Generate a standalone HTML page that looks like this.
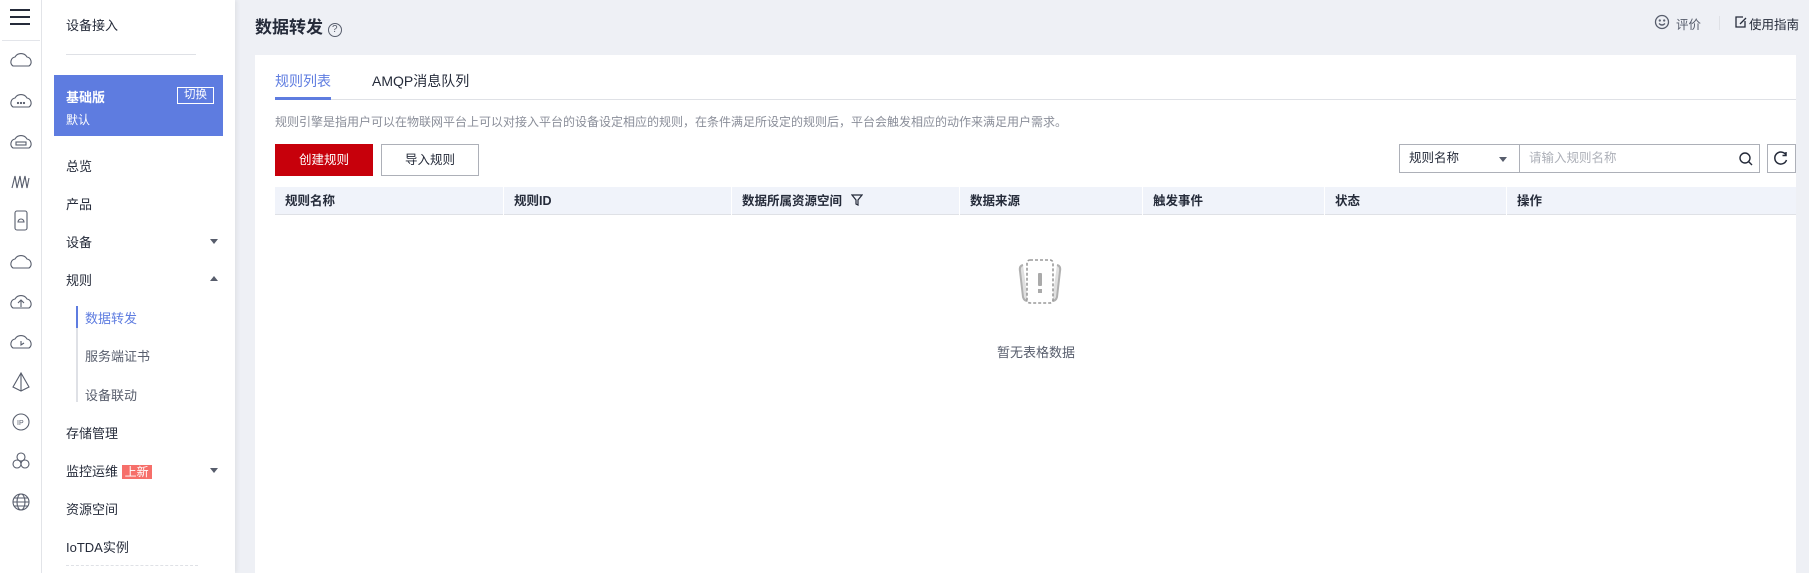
<!DOCTYPE html>
<html><head><meta charset="utf-8"><style>
*{margin:0;padding:0;box-sizing:border-box}
body{width:1809px;height:573px;overflow:hidden;background:#eef0f5;font-family:"Liberation Sans","Noto Sans CJK SC",sans-serif;color:#252b3a;position:relative;font-size:13px}
.a{position:absolute;white-space:nowrap}
.ic{position:absolute;left:0;width:42px;height:573px;background:#fff;border-right:1px solid #e3e5ea}
.sb{position:absolute;left:42px;top:0;width:193px;height:573px;background:#fff;box-shadow:2px 0 4px rgba(0,0,0,.06)}
.mi{position:absolute;left:24px;font-size:13px;color:#252b3a}
.sub{position:absolute;left:43px;font-size:13px;color:#575d6c}
.arr{position:absolute;left:168px;width:0;height:0;border-left:4px solid transparent;border-right:4px solid transparent}
.card{position:absolute;left:255px;top:55px;width:1541px;height:518px;background:#fff}
.th{position:absolute;top:0;height:28px;line-height:28px;font-size:12.5px;color:#252b3a;font-weight:bold;padding-left:10px}
</style></head><body>
<div class="ic">
  <div class="a" style="left:10px;top:9px;width:20px;height:2px;background:#252b3a"></div>
  <div class="a" style="left:10px;top:16px;width:20px;height:2px;background:#252b3a"></div>
  <div class="a" style="left:10px;top:23px;width:20px;height:2px;background:#252b3a"></div>
  <div class="a" style="left:2px;top:40px;width:38px;height:1px;background:#e3e5ea"></div>
  <svg class="a" style="left:9px;top:48px" width="24" height="480" fill="none" stroke="#575d6c" stroke-width="1.1">
    <g transform="translate(0,0)"><path d="M4 18 a5 5 0 0 1 2-9 a7 7 0 0 1 12 0 a5 5 0 0 1 2 9z"/></g>
    <g transform="translate(0,41)"><path d="M4 18 a5 5 0 0 1 2-9 a7 7 0 0 1 12 0 a5 5 0 0 1 2 9z"/><circle cx="9" cy="14" r=".6"/><circle cx="12" cy="14" r=".6"/><circle cx="15" cy="14" r=".6"/></g>
    <g transform="translate(0,82)"><path d="M4 18 a5 5 0 0 1 2-9 a7 7 0 0 1 12 0 a5 5 0 0 1 2 9z"/><rect x="7" y="12" width="10" height="3"/></g>
    <g transform="translate(0,122)"><path d="M3 18 L6 6 L8 18 L11 6 L13 18 L16 6 L18 18 L20 8"/></g>
    <g transform="translate(0,161)"><rect x="6" y="2" width="12" height="19" rx="2"/><path d="M9 13 a3 3 0 0 1 6 0z"/></g>
    <g transform="translate(0,202)"><path d="M4 18 a5 5 0 0 1 2-9 a7 7 0 0 1 12 0 a5 5 0 0 1 2 9z"/></g>
    <g transform="translate(0,242)"><path d="M4 18 a5 5 0 0 1 2-9 a7 7 0 0 1 12 0 a5 5 0 0 1 2 9z"/><path d="M12 17 V11 M9 13 L12 10 L15 13"/></g>
    <g transform="translate(0,282)"><path d="M4 18 a5 5 0 0 1 2-9 a7 7 0 0 1 12 0 a5 5 0 0 1 2 9z"/><path d="M12 11 V15 L15 13"/></g>
    <g transform="translate(0,322)"><path d="M12 3 L4 17 L12 21 L20 17 Z M12 3 V21"/></g>
    <g transform="translate(0,362)"><circle cx="12" cy="12" r="8"/><text x="8" y="15" font-size="7" fill="#575d6c" stroke="none">IP</text></g>
    <g transform="translate(0,401)"><circle cx="12" cy="8" r="4"/><circle cx="8" cy="15" r="4"/><circle cx="16" cy="15" r="4"/></g>
    <g transform="translate(0,442)"><circle cx="12" cy="12" r="8"/><ellipse cx="12" cy="12" rx="4" ry="8"/><path d="M4 12 H20 M5 8 H19 M5 16 H19"/></g>
  </svg>
</div>
<div class="sb">
  <div class="a" style="left:24px;top:15px;font-size:13px">设备接入</div>
  <div class="a" style="left:24px;top:54px;width:130px;height:1px;background:#dfe1e6"></div>
  <div class="a" style="left:12px;top:75px;width:169px;height:61px;background:#5e7ce0"></div>
  <div class="a" style="left:24px;top:87px;color:#fff;font-weight:bold;font-size:13px">基础版</div>
  <div class="a" style="left:24px;top:111px;color:#fff;font-size:12px">默认</div>
  <div class="a" style="left:135px;top:87px;width:37px;height:17px;border:1px solid #fff;color:#fff;font-size:11.5px;line-height:15px;text-align:center">切换</div>
  <div class="mi" style="top:156px">总览</div>
  <div class="mi" style="top:194px">产品</div>
  <div class="mi" style="top:232px">设备</div><div class="arr" style="top:239px;border-top:5px solid #575d6c"></div>
  <div class="mi" style="top:270px">规则</div><div class="arr" style="top:276px;border-bottom:5px solid #575d6c"></div>
  <div class="a" style="left:34px;top:306px;width:2px;height:96px;background:#dfe1e6"></div>
  <div class="a" style="left:34px;top:306px;width:2px;height:22px;background:#5e7ce0"></div>
  <div class="sub" style="top:308px;color:#5e7ce0">数据转发</div>
  <div class="sub" style="top:346px">服务端证书</div>
  <div class="sub" style="top:385px">设备联动</div>
  <div class="mi" style="top:423px">存储管理</div>
  <div class="mi" style="top:461px">监控运维 <span style="background:#f66f6a;color:#fff;padding:0 3px;font-size:12px">上新</span></div><div class="arr" style="top:468px;border-top:5px solid #575d6c"></div>
  <div class="mi" style="top:499px">资源空间</div>
  <div class="mi" style="top:537px">IoTDA实例</div>
  <div class="a" style="left:24px;top:565px;width:132px;border-top:1px dashed #dfe1e6"></div>
</div>
<div class="a" style="left:255px;top:13px;font-size:17px;font-weight:bold;color:#252b3a">数据转发 <span style="display:inline-block;width:14px;height:14px;border:1px solid #575d6c;border-radius:50%;font-size:10px;line-height:12px;text-align:center;font-weight:normal;color:#575d6c;vertical-align:1px">?</span></div>
<svg class="a" style="left:1654px;top:14px" width="16" height="16" fill="none" stroke="#575d6c" stroke-width="1.3"><circle cx="8" cy="8" r="6.5"/><circle cx="5.8" cy="6.5" r=".5"/><circle cx="10.2" cy="6.5" r=".5"/><path d="M5 9.5 Q8 12.5 11 9.5"/></svg>
<div class="a" style="left:1676px;top:14px;font-size:12.5px;color:#575d6c">评价</div>
<div class="a" style="left:1719px;top:16px;width:1px;height:14px;background:#dfe1e6"></div>
<svg class="a" style="left:1734px;top:15px" width="14" height="14" fill="none" stroke="#252b3a" stroke-width="1.3"><path d="M11 6 V12 H2 V2 H9"/><path d="M6 9 L12 3"/></svg>
<div class="a" style="left:1749px;top:14px;font-size:12.5px;color:#252b3a">使用指南</div>
<div class="card">
  <div class="a" style="left:20px;top:16px;font-size:14px;color:#5e7ce0">规则列表</div>
  <div class="a" style="left:117px;top:16px;font-size:14px;color:#252b3a">AMQP消息队列</div>
  <div class="a" style="left:20px;top:44px;width:1521px;height:1px;background:#dfe1e6"></div>
  <div class="a" style="left:20px;top:42px;width:56px;height:3px;background:#5e7ce0"></div>
  <div class="a" style="left:20px;top:58px;font-size:12px;color:#8a8e99">规则引擎是指用户可以在物联网平台上可以对接入平台的设备设定相应的规则，在条件满足所设定的规则后，平台会触发相应的动作来满足用户需求。</div>
  <div class="a" style="left:20px;top:89px;width:98px;height:32px;background:#c7000b;color:#fff;font-size:12.5px;line-height:32px;text-align:center">创建规则</div>
  <div class="a" style="left:126px;top:89px;width:98px;height:32px;border:1px solid #adb0b8;color:#252b3a;font-size:12.5px;line-height:30px;text-align:center">导入规则</div>
  <div class="a" style="left:1144px;top:89px;width:121px;height:29px;border:1px solid #adb0b8;font-size:12.5px;line-height:27px;padding-left:9px">规则名称</div>
  <div class="a" style="left:1244px;top:102px;border-left:4px solid transparent;border-right:4px solid transparent;border-top:5px solid #575d6c"></div>
  <div class="a" style="left:1264px;top:89px;width:241px;height:29px;border:1px solid #adb0b8;font-size:12.5px;line-height:27px;padding-left:9px;color:#adb0b8">请输入规则名称</div>
  <svg class="a" style="left:1484px;top:97px" width="14" height="14" fill="none" stroke="#252b3a" stroke-width="1.4"><circle cx="6" cy="6" r="5"/><path d="M9.5 9.5 L13 13"/></svg>
  <div class="a" style="left:1512px;top:89px;width:29px;height:29px;border:1px solid #adb0b8"></div>
  <svg class="a" style="left:1519px;top:96px" width="14" height="14" fill="none" stroke="#252b3a" stroke-width="1.5"><path d="M12 4 A6 6 0 1 0 12.5 9"/><path d="M12 1 V4.5 H8.5"/></svg>
  <div class="a" style="left:20px;top:132px;width:1521px;height:28px;background:#f0f3fa;border-bottom:1px solid #dfe1e6">
    <div class="th" style="left:0">规则名称</div>
    <div class="th" style="left:228px;border-left:1px solid #fff">规则ID</div>
    <div class="th" style="left:456px;border-left:1px solid #fff">数据所属资源空间 <svg width="12" height="12" style="vertical-align:-1px;margin-left:6px" fill="none" stroke="#252b3a" stroke-width="1.2"><path d="M1 1 H11 L7 6 V11 L5 10 V6 Z"/></svg></div>
    <div class="th" style="left:684px;border-left:1px solid #fff">数据来源</div>
    <div class="th" style="left:867px;border-left:1px solid #fff">触发事件</div>
    <div class="th" style="left:1049px;border-left:1px solid #fff">状态</div>
    <div class="th" style="left:1231px;border-left:1px solid #fff">操作</div>
  </div>
  <svg class="a" style="left:760px;top:202px" width="50" height="52" fill="none">
    <path d="M8 8 Q4 9 5 14 L8 40 Q9 44 13 44 M42 8 Q46 9 45 14 L42 40 Q41 44 37 44" stroke="#b0b0b0" stroke-width="2" fill="#e0e0e0"/>
    <rect x="12" y="3" width="26" height="43" rx="3" stroke="#9a9a9a" stroke-width="1.6" stroke-dasharray="3 2" fill="#fff"/>
    <rect x="23" y="16" width="4" height="13" rx="1" fill="#aaa"/><rect x="23" y="32" width="4" height="4" fill="#aaa"/>
  </svg>
  <div class="a" style="left:741px;top:287px;width:80px;text-align:center;font-size:13px;color:#575d6c">暂无表格数据</div>
</div>
</body></html>
